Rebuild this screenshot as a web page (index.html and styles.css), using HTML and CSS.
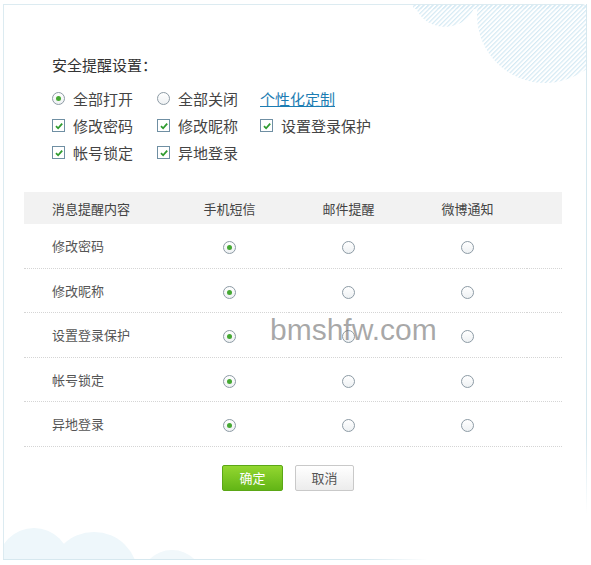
FILE: index.html
```html
<!DOCTYPE html>
<html lang="zh-CN">
  <head>
    <meta charset="UTF-8" />
    <meta name="viewport" content="width=device-width, initial-scale=1.0" />
    <title>安全提醒设置</title>
    <link rel="stylesheet" href="styles.css">
  </head>
  <body>
    <div class="panel">
      <svg class="cloud-top" width="181" height="82" viewBox="0 0 181 82">
        <defs>
          <pattern id="stripes" width="3.2" height="3.2" patternUnits="userSpaceOnUse" patternTransform="rotate(45)">
            <rect width="1.2" height="3.2" fill="#d5eaf4" />
          </pattern>
        </defs>
        <rect x="8" y="0" width="173" height="4" fill="url(#stripes)" />
        <circle cx="40" cy="-10" r="32" fill="url(#stripes)" />
        <circle cx="140" cy="10" r="68" fill="url(#stripes)" />
      </svg>
      <svg class="cloud-bottom" width="220" height="45" viewBox="0 0 220 45">
        <circle cx="30" cy="50" r="36" fill="#eef7fb" />
        <circle cx="90" cy="62" r="44" fill="#eef7fb" />
        <circle cx="168" cy="68" r="32" fill="#f1f8fb" />
      </svg>

      <div class="settings">
        <h2 class="title">安全提醒设置：</h2>
        <div class="options">
          <label class="opt"><span class="radio on"></span>全部打开</label>
          <label class="opt"><span class="radio"></span>全部关闭</label>
          <a class="custom" href="#">个性化定制</a>

          <label class="opt"><span class="check"><svg width="10" height="10" viewBox="0 0 10 10"><path d="M2 5.2 L4.1 7.3 L8.2 2.6" /></svg></span>修改密码</label>
          <label class="opt"><span class="check"><svg width="10" height="10" viewBox="0 0 10 10"><path d="M2 5.2 L4.1 7.3 L8.2 2.6" /></svg></span>修改昵称</label>
          <label class="opt"><span class="check"><svg width="10" height="10" viewBox="0 0 10 10"><path d="M2 5.2 L4.1 7.3 L8.2 2.6" /></svg></span>设置登录保护</label>

          <label class="opt"><span class="check"><svg width="10" height="10" viewBox="0 0 10 10"><path d="M2 5.2 L4.1 7.3 L8.2 2.6" /></svg></span>帐号锁定</label>
          <label class="opt"><span class="check"><svg width="10" height="10" viewBox="0 0 10 10"><path d="M2 5.2 L4.1 7.3 L8.2 2.6" /></svg></span>异地登录</label>
        </div>
      </div>

      <table class="notify">
        <colgroup>
          <col class="c-name" />
          <col class="c-way" />
          <col class="c-way" />
          <col class="c-way" />
          <col />
        </colgroup>
        <thead>
          <tr>
            <th class="name">消息提醒内容</th>
            <th>手机短信</th>
            <th>邮件提醒</th>
            <th>微博通知</th>
            <th></th>
          </tr>
        </thead>
        <tbody>
          <tr>
            <td class="name">修改密码</td>
            <td><span class="radio on"></span></td>
            <td><span class="radio"></span></td>
            <td><span class="radio"></span></td>
            <td></td>
          </tr>
          <tr>
            <td class="name">修改昵称</td>
            <td><span class="radio on"></span></td>
            <td><span class="radio"></span></td>
            <td><span class="radio"></span></td>
            <td></td>
          </tr>
          <tr>
            <td class="name">设置登录保护</td>
            <td><span class="radio on"></span></td>
            <td><span class="radio"></span></td>
            <td><span class="radio"></span></td>
            <td></td>
          </tr>
          <tr>
            <td class="name">帐号锁定</td>
            <td><span class="radio on"></span></td>
            <td><span class="radio"></span></td>
            <td><span class="radio"></span></td>
            <td></td>
          </tr>
          <tr>
            <td class="name">异地登录</td>
            <td><span class="radio on"></span></td>
            <td><span class="radio"></span></td>
            <td><span class="radio"></span></td>
            <td></td>
          </tr>
        </tbody>
      </table>

      <div class="actions">
        <button class="btn ok">确定</button>
        <button class="btn cancel">取消</button>
      </div>

      <div class="watermark">bmshfw.com</div>
    </div>
  </body>
</html>
```

FILE: styles.css
```css
body {
  margin: 0;
  background: #ffffff;
  font-family: "Noto Sans CJK SC", "Noto Sans", sans-serif;
  color: #444;
}

.panel {
  position: relative;
  width: 582px;
  margin: 4px 0 0 3px;
  padding-bottom: 69px;
  border-top: 1px solid #dcebf1;
  border-left: 1px solid #dcebf1;
  border-top-right-radius: 4px;
}

.panel::before {
  content: "";
  position: absolute;
  top: -1px;
  right: -1px;
  width: 1px;
  height: 510px;
  background: linear-gradient(to bottom, #d6e8ef 85%, rgba(214, 232, 239, 0));
}

.panel::after {
  content: "";
  position: absolute;
  left: -1px;
  bottom: 0;
  width: 425px;
  height: 1px;
  background: linear-gradient(to right, #d6e8ef 85%, rgba(214, 232, 239, 0));
}

.cloud-top {
  position: absolute;
  top: 0;
  left: 401px;
}

.cloud-bottom {
  position: absolute;
  left: 0;
  bottom: 1px;
}

.settings {
  position: relative;
  padding: 50px 0 0 48px;
}

.title {
  margin: 0;
  font-size: 15px;
  font-weight: normal;
  line-height: 20px;
  color: #333;
}

.options {
  display: grid;
  grid-template-columns: 105px 103px auto;
  grid-auto-rows: 27px;
  margin-top: 10px;
  font-size: 15px;
}

.opt {
  display: flex;
  align-items: center;
  gap: 8px;
  color: #444;
}

.custom {
  align-self: center;
  color: #1c7db3;
  text-decoration: underline;
}

.radio {
  display: inline-block;
  position: relative;
  box-sizing: border-box;
  width: 13px;
  height: 13px;
  border: 1px solid #8d9ba5;
  border-radius: 50%;
  background: linear-gradient(#ffffff, #eef1f3);
  vertical-align: middle;
}

.radio.on::after {
  content: "";
  position: absolute;
  left: 3px;
  top: 3px;
  width: 5px;
  height: 5px;
  border-radius: 50%;
  background: #45a833;
}

.check {
  display: inline-flex;
  align-items: center;
  justify-content: center;
  box-sizing: border-box;
  width: 13px;
  height: 13px;
  border: 1px solid #6f8fa3;
  background: #fff;
}

.check path {
  fill: none;
  stroke: #2f9b2f;
  stroke-width: 1.8;
}

.notify {
  position: relative;
  width: 538px;
  margin: 26px 0 0 20px;
  border-collapse: collapse;
  table-layout: fixed;
  font-size: 13px;
}

.c-name {
  width: 146px;
}

.c-way {
  width: 119px;
}

.notify th {
  height: 32px;
  padding: 0;
  background: #f2f2f2;
  font-weight: normal;
  text-align: center;
  color: #444;
}

.notify td {
  height: 43.5px;
  padding: 0;
  text-align: center;
  border-bottom: 1px dotted #d5d5d5;
  color: #555;
}

.notify .name {
  padding-left: 28px;
  text-align: left;
}

.notify td .radio {
  width: 13px;
  height: 13px;
}

.actions {
  position: relative;
  display: flex;
  gap: 12px;
  margin: 18px 0 0 218px;
}

.btn {
  height: 26px;
  padding: 0;
  border-radius: 2px;
  font-family: "Noto Sans CJK SC", sans-serif;
  font-size: 13px;
  cursor: pointer;
}

.ok {
  width: 61px;
  border: 1px solid #5ba716;
  background: linear-gradient(#93d730, #62b516);
  color: #fff;
}

.cancel {
  width: 59px;
  border: 1px solid #c9c9c9;
  background: linear-gradient(#ffffff, #ececec);
  color: #555;
}

.watermark {
  position: absolute;
  left: 266px;
  top: 310px;
  font-family: "Liberation Sans", Arial, sans-serif;
  font-size: 30px;
  line-height: 30px;
  color: rgba(110, 110, 110, 0.6);
}
```
